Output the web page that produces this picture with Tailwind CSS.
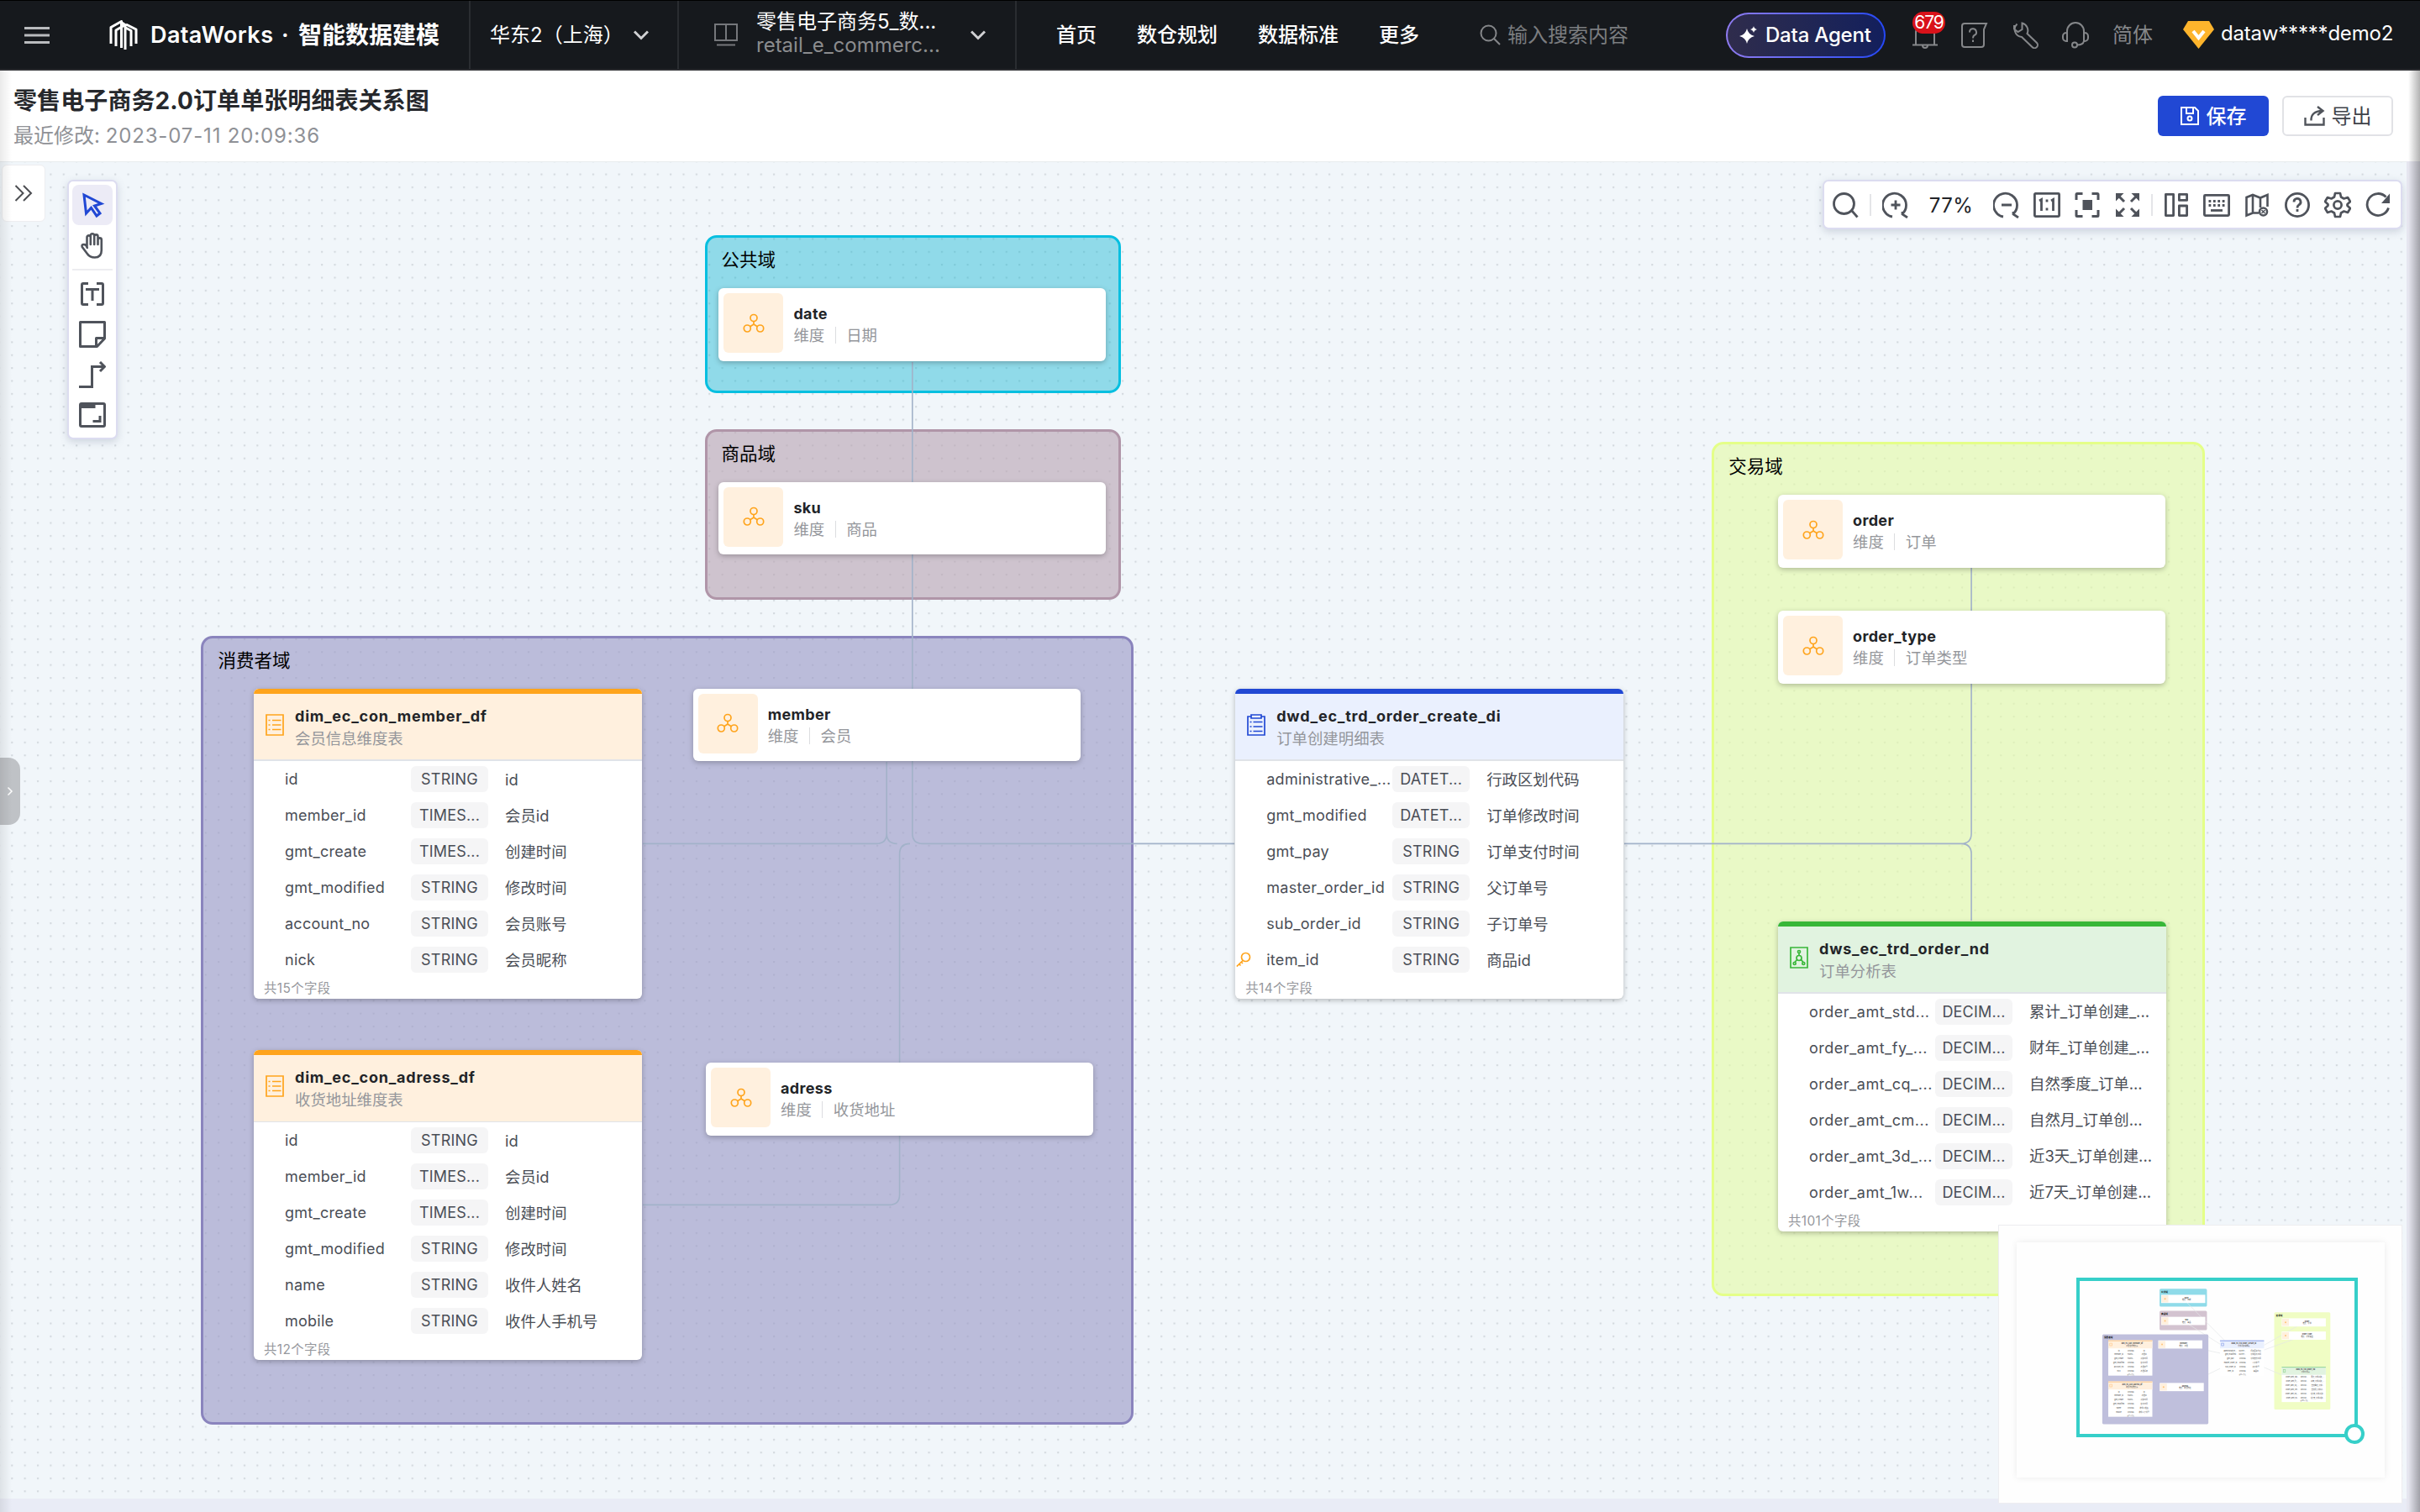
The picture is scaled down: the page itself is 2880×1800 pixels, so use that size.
<!DOCTYPE html>
<html lang="zh-CN">
<head>
    <meta charset="UTF-8">
    <meta name="viewport" content="width=device-width, initial-scale=1.0">
    <title>DataWorks · 智能数据建模</title>
    <script src="https://cdn.jsdelivr.net/npm/@tailwindcss/browser@4"></script>
</head>
<body class="w-[2880px] h-[1800px] overflow-hidden bg-[#e9ecf6] font-['Inter','Noto_Sans_CJK_SC',sans-serif] text-[24px] leading-none flex flex-col">

    <!-- 顶部导航 -->
    <header class="h-[84px] shrink-0 bg-[#16191d] border-t border-t-black border-b-2 border-b-[#2b2c30] flex items-stretch text-white whitespace-nowrap">
        <div class="w-[560px] shrink-0 border-r-2 border-[#2a2d31] flex items-center pl-[29px]">
            <svg class="w-[30px] h-[20px]" viewBox="0 0 30 20" fill="#b9bbbe"><path d="M0 0h30v3H0zM0 8.5h30v3H0zM0 17h30v3H0z"/></svg>
            <svg class="w-[34px] h-[36px] ml-[71px]" viewBox="0 0 34 36" fill="none" stroke="#fff" stroke-width="3" stroke-linejoin="round">
                <path d="M2 28V8.500L14.500 1.500V33M8 31V12l11-6.500 V35M13.500 2l6 4M26 31V12.500L19.500 9M20 5l12 6v17"/>
            </svg>
            <span class="ml-[15px] w-[146px] text-[27px] font-semibold tracking-[0.4px]">DataWorks</span>
            <span class="ml-[10px] w-[20px] text-[27px] font-semibold">·</span>
            <span class="text-[28px] font-bold">智能数据建模</span>
        </div>
        <div class="w-[248px] shrink-0 border-r-2 border-[#2a2d31] flex items-center pl-[23px]">
            <span class="w-[171px]">华东2（上海）</span>
            <svg class="w-[18px] h-[12px]" viewBox="0 0 18 12" fill="none" stroke="#d0d1d3" stroke-width="3"><path d="M1 1.500l8 8 8-8"/></svg>
        </div>
        <div class="w-[402px] shrink-0 border-r-2 border-[#2a2d31] flex items-center pl-[42px]">
            <svg class="w-[28px] h-[28px]" viewBox="0 0 28 28" fill="none" stroke="#75777b" stroke-width="2"><path d="M1 1h26v19H1zM14 1v19M3 25.500h22"/></svg>
            <div class="ml-[22px] w-[255px] pb-[3px]">
                <div class="h-[28px] leading-[28px]">零售电子商务5_数...</div>
                <div class="h-[28px] leading-[28px] text-[#8b8c8e]">retail_e_commerc...</div>
            </div>
            <svg class="w-[18px] h-[12px]" viewBox="0 0 18 12" fill="none" stroke="#d0d1d3" stroke-width="3"><path d="M1 1.500l8 8 8-8"/></svg>
        </div>
        <nav class="ml-[47px] flex items-center gap-12 font-medium">
            <a>首页</a><a>数仓规划</a><a>数据标准</a><a>更多</a>
        </nav>
        <div class="ml-[72px] flex items-center text-[#7b7d80]">
            <svg class="w-[25px] h-[25px] mr-[8px]" viewBox="0 0 25 25" fill="none" stroke="#85878a" stroke-width="2"><circle cx="10.500" cy="10.500" r="9"/><path d="M17 17l7 7"/></svg>
            输入搜索内容
        </div>
        <div class="ml-auto flex items-center pr-[33px]">
            <div class="w-[190px] h-[54px] rounded-full p-[2px] bg-linear-to-r from-[#8f7bf0] to-[#2447f5]">
                <div class="w-full h-full rounded-full bg-linear-to-r from-[#2f2c4c] to-[#131f5c] flex items-center pl-[14px]">
                    <svg class="w-[22px] h-[22px]" viewBox="0 0 22 22" fill="#fff"><path d="M9 3q1.500 7 9 9-7.500 2-9 9-1.500-7-9-9 7.500-2 9-9zM17 0q.6 3 4 4-3.400 1-4 4-.6-3-4-4 3.400-1 4-4z"/></svg>
                    <span class="ml-[9px] tracking-[-0.2px] font-medium">Data Agent</span>
                </div>
            </div>
            <div class="relative ml-[32px] w-[30px] h-[32px]">
                <svg class="w-[30px] h-[32px]" viewBox="0 0 30 32" fill="none" stroke="#85878a" stroke-width="2"><path d="M4 27V13a11 11 0 0 1 22 0v14M0 27.500h30M12 28a3 3 0 0 0 6 0"/></svg>
                <span class="absolute left-0 -top-[12px] w-[39px] h-[26px] rounded-full bg-[#d9121a] text-[21px] leading-[26px] text-center tracking-[-1px]">679</span>
            </div>
            <svg class="ml-[28px] w-[32px] h-[30px]" viewBox="0 0 32 30" fill="none" stroke="#85878a" stroke-width="2"><path d="M30 1H4a3 3 0 0 0-3 3v22a3 3 0 0 0 3 3h20a3 3 0 0 0 3-3V8z"/><path d="M10 11.500a4 4 0 1 1 5.500 3.500q-1.500.8-1.500 3.500M14 20.500v2.500"/></svg>
            <svg class="ml-[28px] w-[32px] h-[32px]" viewBox="0 0 32 32" fill="none" stroke="#85878a" stroke-width="2"><path d="M6.500 2.500A9 9 0 0 0 12 18l12.500 12a3.600 3.600 0 0 0 5.500-5L18.500 14A9 9 0 0 0 12.500 1.500V9L7.500 12 3 8.500V4"/></svg>
            <svg class="ml-[28px] w-[32px] h-[32px]" viewBox="0 0 32 32" fill="none" stroke="#85878a" stroke-width="2"><path d="M6 13V11a10 10 0 0 1 20 0v2M6 13v10H5a4 4 0 0 1-4-4v-2a4 4 0 0 1 4-4zM26 13v10h1a4 4 0 0 0 4-4v-2a4 4 0 0 0-4-4zM26 23q-1 4.500-8 4.500"/><circle cx="15" cy="27.500" r="3"/></svg>
            <span class="ml-[28px] text-[#85878a]">简体</span>
            <svg class="ml-[36px] w-[37px] h-[33px]" viewBox="0 0 37 33"><path d="M6 0h25l6 10-18.500 23L0 10z" fill="#fdb42c"/><path d="M12 12l6.500 8 6.500-8" fill="none" stroke="#fff" stroke-width="4"/></svg>
            <span class="ml-[8px] w-[204px] pb-[3px] tracking-[-0.2px]">dataw*****demo2</span>
        </div>
    </header>

    <!-- 标题栏 -->
    <section class="h-[108px] shrink-0 bg-white flex items-center pl-[16px] pr-[32px]">
        <div class="h-full pt-[18px]">
            <h1 class="h-[36px] leading-[36px] text-[28px] font-bold text-[#26282c] tracking-[0.1px]">零售电子商务2.0订单单张明细表关系图</h1>
            <p class="mt-[9px] h-[30px] leading-[30px] text-[#8f9196]">最近修改: <span class="tracking-[0.85px]">2023-07-11 20:09:36</span></p>
        </div>
        <button class="ml-auto w-[132px] h-[48px] rounded-[6px] bg-[#2148d4] text-white flex items-center justify-center gap-[9px] font-medium">
            <svg class="w-[22px] h-[22px]" viewBox="0 0 22 22" fill="none" stroke="#fff" stroke-width="2"><path d="M1 1h16l4 4v16H1zM7 1v7h8V1"/><circle cx="11" cy="14" r="2.500"/></svg>
            <span class="pt-[2px]">保存</span>
        </button>
        <button class="ml-[16px] w-[132px] h-[48px] rounded-[6px] border-2 border-[#e1e2e6] text-[#3f434a] flex items-center justify-center gap-[8px]">
            <svg class="w-[25px] h-[24px]" viewBox="0 0 25 24" fill="none" stroke="#50545b" stroke-width="2.400"><path d="M1.500 14v8.500h22V14M8.500 17.500q-.5-11 13-11.500M16 1l6.500 5-6.500 5"/></svg>
            <span class="pt-[2px]">导出</span>
        </button>
    </section>

    <!-- 画布 -->
    <main class="relative w-[2864px] h-[1592px] border-t border-[#e8ecee] bg-[#f1f6fa] overflow-hidden">
        <svg class="absolute left-0 top-0 w-full h-full">
            <defs>
                <pattern id="grid" width="15.37" height="15.37" patternUnits="userSpaceOnUse" x="6.500" y="6.800">
                    <rect x="6.700" y="6.700" width="2.200" height="2.200" rx=".5" fill="#d3d9de"/>
                </pattern>
            </defs>
            <rect width="100%" height="100%" fill="url(#grid)"/>
        </svg>
        <div id="groups"></div>
        <svg class="absolute left-0 -top-[193px] w-[2864px] h-[1800px]" fill="none" stroke="#a2b2c9" stroke-width="1.600">
            <path d="M1085.800 431V992q0 12.400 12.400 12.400H1469"/>
            <path d="M1055.200 907V992q0 12.400 12.400 12.400M1055.200 992q0 12.400-12.400 12.400H765"/>
            <path d="M1083 1004.400q-12.400 0-12.400 12.400V1422q0 12.400-12.400 12.400H765"/>
            <path d="M1933 1004.400H2333.700q12.400 0 12.400-12.400V676M2333.700 1004.400q12.400 0 12.400 12.400V1096"/>
        </svg>
        <div id="nodes"></div>

        <button class="absolute left-[2px] top-[3px] w-[52px] h-[68px] rounded-[6px] bg-white border border-[#ededf0] flex items-center justify-center">
            <svg class="w-[22px] h-[20px]" viewBox="0 0 22 20" fill="none" stroke="#4c4e52" stroke-width="2"><path d="M1.500 1l9 9-9 9M11 1l9 9-9 9"/></svg>
        </button>

        <!-- 左侧工具 -->
        <div class="absolute left-[80px] top-[21px] w-[60px] h-[309px] rounded-[7px] bg-white border-2 border-[#dcdcf0] shadow-[0_3px_10px_rgba(100,110,140,0.25)] flex flex-col items-center pt-[4px] text-[#4f535b]">
            <button class="w-12 h-12 rounded-[8px] bg-[#ecebf6] flex items-center justify-center text-[#2148d4]">
                <svg class="w-[32px] h-[32px]" viewBox="0 0 32 32" fill="none" stroke="currentColor" stroke-width="3"><path d="M6 4l2.500 22 6-6.500 6.500 9.500 4-3-6.500-9 8-2.500z"/></svg>
            </button>
            <button class="w-12 h-12 flex items-center justify-center">
                <svg class="w-[32px] h-[32px]" viewBox="0 0 32 32" fill="none" stroke="currentColor" stroke-width="2.600" stroke-linecap="round" stroke-linejoin="round"><path d="M9.500 18V6.500a2 2 0 0 1 4.300 0V15M13.800 15V4.500a2.200 2.200 0 0 1 4.400 0V15M18.200 15V5.500a2.100 2.100 0 0 1 4.300 0V15M22.500 15V9.500a2.100 2.100 0 0 1 4.300 0V22q0 8.500-8 8.500-6 0-9-4.500l-6-8q-1-3 2-3t4 4"/></svg>
            </button>
            <div class="w-12 h-[2px] my-[4px] bg-[#ededf0]"></div>
            <button class="w-12 h-12 flex items-center justify-center">
                <svg class="w-[32px] h-[32px]" viewBox="0 0 32 32" fill="none" stroke="currentColor" stroke-width="3"><path d="M11 3.500H5a1.500 1.500 0 0 0-1.500 1.500v22A1.500 1.500 0 0 0 5 28.500h6M21 3.500h6a1.500 1.500 0 0 1 1.500 1.500v22a1.500 1.500 0 0 1-1.500 1.500h-6M8 10.500h16M16 10.500V24"/></svg>
            </button>
            <button class="w-12 h-12 flex items-center justify-center">
                <svg class="w-[32px] h-[32px]" viewBox="0 0 32 32" fill="none" stroke="currentColor" stroke-width="3"><path d="M1.500 1.500h29V21L21.500 30.500h-20zM20.500 30V20.500h10" stroke-linejoin="round"/></svg>
            </button>
            <button class="w-12 h-12 flex items-center justify-center">
                <svg class="w-[32px] h-[32px]" viewBox="0 0 32 32" fill="none" stroke="currentColor" stroke-width="3"><path d="M0 30.500h15.500V6.500H30M25 1l5.500 5.500L25 12"/></svg>
            </button>
            <button class="w-12 h-12 flex items-center justify-center">
                <svg class="w-[32px] h-[32px]" viewBox="0 0 32 32" fill="none" stroke="currentColor" stroke-width="3"><rect x="1.500" y="2.500" width="29" height="27" rx="1.500"/><path d="M1.500 5.500h18" stroke-width="5"/><path d="M16.500 23.500h8.500V17"/></svg>
            </button>
        </div>

        <!-- 右上工具 -->
        <div class="absolute left-[2169px] top-[21px] w-[690px] h-[59px] rounded-[7px] bg-white border-2 border-[#dcdcf0] shadow-[0_3px_10px_rgba(100,110,140,0.25)] flex items-center pl-px pt-px text-[#4f535b]">
            <span class="w-12 flex justify-center"><svg class="w-[32px] h-[32px]" viewBox="0 0 32 32" fill="none" stroke="currentColor" stroke-width="2.800"><circle cx="14.500" cy="14.500" r="12"/><path d="M23.500 22.500l7 8"/></svg></span>
            <span class="w-[2px] h-[26px] mx-[5px] bg-[#e4e5e8]"></span>
            <span class="w-12 flex justify-center"><svg class="w-[32px] h-[32px]" viewBox="0 0 32 32" fill="none" stroke="currentColor" stroke-width="2.800"><path d="M12 30a14 14 0 1 1 12-3.500M24 24v3l6 4M16 10.500v11M10.500 16h11"/></svg></span>
            <span class="w-[84px] pt-px text-center text-[#222428] tracking-[0.4px]">77%</span>
            <span class="w-12 flex justify-center"><svg class="w-[32px] h-[32px]" viewBox="0 0 32 32" fill="none" stroke="currentColor" stroke-width="2.800"><path d="M12 30a14 14 0 1 1 12-3.500M24 24v3l6 4M10 16h12"/></svg></span>
            <span class="w-12 flex justify-center"><svg class="w-[32px] h-[32px]" viewBox="0 0 32 32" fill="none" stroke="currentColor" stroke-width="2.800"><rect x="1.400" y="2.400" width="29.200" height="27.200" rx="1"/><path d="M7 11l2.500-1.500V23M21 11l2.500-1.500V23M14.600 11h2.800M14.600 21h2.800"/></svg></span>
            <span class="w-12 flex justify-center"><svg class="w-[32px] h-[32px]" viewBox="0 0 32 32" fill="none" stroke="currentColor" stroke-width="3"><path d="M3 10V3.500a1 1 0 0 1 1-1h6.500M21.500 2.500H28a1 1 0 0 1 1 1V10M29 22v6.500a1 1 0 0 1-1 1h-6.500M10.500 29.500H4a1 1 0 0 1-1-1V22"/><path d="M10.500 10h11.500v12H10.500z" fill="currentColor" stroke="none"/></svg></span>
            <span class="w-12 flex justify-center"><svg class="w-[32px] h-[32px]" viewBox="0 0 32 32" fill="none" stroke="currentColor" stroke-width="3"><path d="M5 5l7 7M27 5l-7 7M5 27l7-7M27 27l-7-7"/><path d="M2 2h9.500L2 11.500zM30 2v9.500L20.500 2zM2 30v-9.500L11.500 30zM30 30h-9.500L30 20.500z" fill="currentColor" stroke="none"/></svg></span>
            <span class="w-[2px] h-[26px] mx-[4px] bg-[#e4e5e8]"></span>
            <span class="w-12 flex justify-center"><svg class="w-[32px] h-[32px]" viewBox="0 0 32 32" fill="none" stroke="currentColor" stroke-width="2.800"><path d="M3.400 3.400h9.200v25.200H3.400zM19.400 3.400h9.200v7H19.400zM19.400 17h9.200v11.600H19.400z" stroke-linejoin="round"/></svg></span>
            <span class="w-12 flex justify-center"><svg class="w-[32px] h-[32px]" viewBox="0 0 32 32" fill="none" stroke="currentColor" stroke-width="2.800"><rect x="1.400" y="4.400" width="29.200" height="24.200" rx="1"/><path d="M6.500 11.500h19M6.500 16.500h19" stroke-dasharray="2.800 2.600"/><path d="M9 22.500h14"/></svg></span>
            <span class="w-12 flex justify-center"><svg class="w-[32px] h-[32px]" viewBox="0 0 32 32" fill="none" stroke="currentColor" stroke-width="2.600"><path d="M18 25.500l-7 0-7.500 3V7l7.500-3 9 3.500L28.500 4v14M11 4v21.500M20 7.500V19"/><circle cx="23.500" cy="24" r="4.500"/><path d="M21.500 22l4 4M25.500 22l-4 4" stroke-width="1.500"/></svg></span>
            <span class="w-12 flex justify-center"><svg class="w-[32px] h-[32px]" viewBox="0 0 32 32" fill="none" stroke="currentColor" stroke-width="2.800"><circle cx="16" cy="16" r="13.600"/><path d="M12 12.500a4 4 0 1 1 5.800 3.500q-1.800 1-1.800 3.500M16 21v3"/></svg></span>
            <span class="w-12 flex justify-center"><svg class="w-[32px] h-[32px]" viewBox="0 0 32 32" fill="none" stroke="currentColor" stroke-width="2.700" stroke-linejoin="round"><path d="M13 2h6l1 4.500 3.500 2 4.500-1.500 3 5-3.500 3.200v1.600L31 20l-3 5-4.500-1.500-3.500 2L19 30h-6l-1-4.500-3.500-2L4 25l-3-5 3.500-3.200v-1.600L1 12l3-5 4.500 1.500 3.500-2z"/><circle cx="16" cy="16" r="4.600"/></svg></span>
            <span class="w-12 flex justify-center"><svg class="w-[32px] h-[32px]" viewBox="0 0 32 32" fill="none" stroke="currentColor" stroke-width="2.800"><path d="M28.500 19.500A13 13 0 1 1 25.500 6.500"/><path d="M30 2.500V14H20z" fill="currentColor" stroke="none"/></svg></span>
        </div>

    </main>

    <!-- 缩略图 -->
    <aside class="absolute left-[2378px] top-[1458px] w-[481px] h-[332px] bg-[#fefefe] border border-[#ededf0] pl-[21px] pt-[20px]">
        <div class="relative w-[438px] h-[280px] bg-[#fefefe] shadow-[0_0_8px_rgba(0,0,0,0.08)]">
            <svg id="minimap" class="w-[438px] h-[280px]" viewBox="-656 -205 3849 2460"></svg>
            <div class="absolute left-[71px] top-[42px] w-[335px] h-[190px] border-4 border-[#36cfc9]"></div>
            <div class="absolute left-[390px] top-[216px] w-[24px] h-[24px] rounded-full bg-white border-4 border-[#36cfc9]"></div>
        </div>
    </aside>

    <button class="absolute left-0 top-[902px] w-[24px] h-[80px] rounded-r-[14px] bg-[#bfc2c6] flex items-center justify-center">
        <svg class="w-[8px] h-[12px]" viewBox="0 0 8 12" fill="none" stroke="#fff" stroke-width="1.500"><path d="M1.500 1.500L6 6l-4.500 4.500"/></svg>
    </button>
    <div class="absolute left-0 top-[84px] w-[14px] h-[1716px] bg-linear-to-r from-black/8 to-transparent pointer-events-none"></div>
    <div class="absolute left-[2864px] top-[192px] w-[16px] h-[1608px] bg-[#e6e6f0]"></div>
    <div class="absolute left-[2866px] top-[84px] w-[14px] h-[1716px] bg-linear-to-l from-black/30 to-transparent pointer-events-none"></div>

    <script>
        // 主题域分组
        const groups = [
            { x: 838.6, y: 280, w: 495.2, h: 187.7, name: '公共域', cls: 'border-[#06bfe0] bg-[#00b2cf]/40', fill: '#8fdbe9' },
            { x: 838.6, y: 510.7, w: 495.2, h: 203, name: '商品域', cls: 'border-[#b095a8] bg-[#b8a1b1]/60', fill: '#d3c3d0' },
            { x: 239.4, y: 756.8, w: 1109.4, h: 939.5, name: '消费者域', cls: 'border-[#8a84bd] bg-[#9896c4]/60', fill: '#bfbfdc' },
            { x: 2037.3, y: 526, w: 587.2, h: 1017.3, name: '交易域', cls: 'border-[#e4ff88] bg-[#e5fca4]/60', fill: '#f0fdc4' }
        ];

        // 维度
        const dims = [
            { x: 855.4, y: 343.2, name: 'date', desc: '日期' },
            { x: 855.4, y: 573.7, name: 'sku', desc: '商品' },
            { x: 824.7, y: 819.8, name: 'member', desc: '会员' },
            { x: 840, y: 1265.4, name: 'adress', desc: '收货地址' },
            { x: 2116, y: 589, name: 'order', desc: '订单' },
            { x: 2116, y: 727.4, name: 'order_type', desc: '订单类型' }
        ];

        // 图标
        const dimIcon = '<svg class="w-[26px] h-[24px]" viewBox="0 0 26 24" fill="none" stroke="#ffa41c" stroke-width="1.700"><circle cx="13" cy="5.500" r="4"/><circle cx="5.300" cy="18" r="4"/><circle cx="20.700" cy="18" r="4"/><path d="M13 9.500v3.500M8.700 15.700L13 13l4.300 2.700"/></svg>';
        const listIcon = '<svg class="w-[22px] h-[26px]" viewBox="0 0 22 26" fill="none" stroke="#ffa41c" stroke-width="1.700"><path d="M1 1h20v24H1zM3.500 7.500h2M8 7.500h10.500M3.500 13h2M8 13h10.500M3.500 18.500h2M8 18.500h10.500"/></svg>';
        const factIcon = '<svg class="w-[22px] h-[26px]" viewBox="0 0 22 26" fill="none" stroke="#2148d4" stroke-width="1.700"><path d="M5 3H1v22h20V3h-4M5 1h12v4H5zM3.500 9.500h2M7.500 9.500h11M3.500 15h2M7.500 15h11M3.500 20.500h2M7.500 20.500h11"/></svg>';
        const aggIcon = '<svg class="w-[22px] h-[26px]" viewBox="0 0 22 26" fill="none" stroke="#38b738" stroke-width="1.700"><path d="M1 1h20v24H1zM11 7.500v3M8.500 15.500L6 18.500M13.500 15.500l2.500 3"/><circle cx="11" cy="6" r="1.500"/><circle cx="11" cy="13.500" r="3"/><circle cx="5.700" cy="20" r="1.500"/><circle cx="16.300" cy="20" r="1.500"/></svg>';
        const keyIcon = '<svg class="w-[18px] h-[18px]" viewBox="0 0 18 18" fill="none" stroke="#ffa41c" stroke-width="1.700"><circle cx="11.500" cy="6.500" r="5"/><path d="M8 10.500L.8 17.500M3.500 14.500l2 2M6 12l2 2"/></svg>';

        // 表
        const tables = [
            {
                x: 302, y: 819.8, name: 'dim_ec_con_member_df', desc: '会员信息维度表', total: 15, icon: listIcon,
                cls: 'border-[#ffa41c] bg-[#fff0de]', top: '#ffc88a', fill: '#fff0de', gap: 'tracking-[0.25px]',
                rows: [['id', 'STRING', 'id'], ['member_id', 'TIMES...', '会员id'], ['gmt_create', 'TIMES...', '创建时间'], ['gmt_modified', 'STRING', '修改时间'], ['account_no', 'STRING', '会员账号'], ['nick', 'STRING', '会员昵称']]
            },
            {
                x: 302, y: 1250.2, name: 'dim_ec_con_adress_df', desc: '收货地址维度表', total: 12, icon: listIcon,
                cls: 'border-[#ffa41c] bg-[#fff0de]', top: '#ffc88a', fill: '#fff0de', gap: 'tracking-[0.25px]',
                rows: [['id', 'STRING', 'id'], ['member_id', 'TIMES...', '会员id'], ['gmt_create', 'TIMES...', '创建时间'], ['gmt_modified', 'STRING', '修改时间'], ['name', 'STRING', '收件人姓名'], ['mobile', 'STRING', '收件人手机号']]
            },
            {
                x: 1470.2, y: 819.8, name: 'dwd_ec_trd_order_create_di', desc: '订单创建明细表', total: 14, icon: factIcon,
                cls: 'border-[#2148d4] bg-[#eaf0fe]', top: '#8ba0e8', fill: '#eaf0fe', gap: 'tracking-[0.3px]',
                rows: [['administrative_...', 'DATET...', '行政区划代码'], ['gmt_modified', 'DATET...', '订单修改时间'], ['gmt_pay', 'STRING', '订单支付时间'], ['master_order_id', 'STRING', '父订单号'], ['sub_order_id', 'STRING', '子订单号'], ['item_id', 'STRING', '商品id', true]]
            },
            {
                x: 2116, y: 1096.5, name: 'dws_ec_trd_order_nd', desc: '订单分析表', total: 101, icon: aggIcon,
                cls: 'border-[#38b738] bg-[#e1f3e0]', top: '#93d593', fill: '#e1f3e0', gap: 'tracking-[0.5px]',
                rows: [['order_amt_std...', 'DECIM...', '累计_订单创建_...'], ['order_amt_fy_...', 'DECIM...', '财年_订单创建_...'], ['order_amt_cq_...', 'DECIM...', '自然季度_订单...'], ['order_amt_cm...', 'DECIM...', '自然月_订单创...'], ['order_amt_3d_...', 'DECIM...', '近3天_订单创建...'], ['order_amt_1w...', 'DECIM...', '近7天_订单创建...']]
            }
        ];

        const TOP = 193;

        document.getElementById('groups').innerHTML = groups.map(g => `
            <div class="absolute rounded-[14px] border-3 pl-[17px] pt-[13px] text-[21.5px] leading-[26px] text-black ${g.cls}" style="left:${g.x}px;top:${g.y - TOP}px;width:${g.w}px;height:${g.h}px">${g.name}</div>`).join('');

        document.getElementById('nodes').innerHTML = dims.map(d => `
            <div class="absolute w-[461px] h-[86.5px] rounded-[6px] bg-white shadow-[0_2px_6px_rgba(0,0,0,0.25)] flex pl-[6px] pt-[6px] whitespace-nowrap" style="left:${d.x}px;top:${d.y - TOP}px">
                <div class="w-[71px] h-[71px] rounded-[6px] bg-[#fff0de] flex items-center justify-center">${dimIcon}</div>
                <div class="ml-[12px] pt-[13px]">
                    <div class="h-[24px] leading-[24px] text-[18px] font-bold text-[#222428] tracking-[0.35px]">${d.name}</div>
                    <div class="h-[26px] leading-[26px] text-[18.4px] text-[#94969b] flex items-center">
                        <span>维度</span><span class="w-px h-[20px] mx-[12.5px] bg-[#dcdde0]"></span><span>${d.desc}</span>
                    </div>
                </div>
            </div>`).join('') + tables.map(t => `
            <div class="absolute w-[461.500px] h-[369px] rounded-[6px] bg-white shadow-[0_2px_6px_rgba(0,0,0,0.25)] overflow-hidden whitespace-nowrap" style="left:${t.x}px;top:${t.y - TOP}px">
                <div class="h-[84.500px] border-t-6 flex pl-[14px] pt-[15px] ${t.cls}">
                    <div class="pt-[9px] w-[35px]">${t.icon}</div>
                    <div>
                        <div class="h-[25px] leading-[24px] text-[18px] font-bold text-[#222428] tracking-[0.78px]">${t.name}</div>
                        <div class="h-[26px] leading-[26px] text-[18.4px] text-[#94969b]">${t.desc}</div>
                    </div>
                </div>
                <div class="h-[1.5px] bg-[#e0e3e8]"></div>
                ${t.rows.map(r => `
                <div class="h-[43.04px] flex items-center text-[18px] text-[#4a4e56]">
                    <span class="w-[37px] pl-px">${r[3] ? keyIcon : ''}</span>
                    <span class="w-[150px] pt-px ${t.gap}">${r[0]}</span>
                    <span class="w-[92px] h-[31px] leading-[32px] rounded-[6px] bg-[#f5f5f6] text-center tracking-[0.2px]">${r[1]}</span>
                    <span class="ml-[20px] pt-px text-[18.4px]">${r[2]}</span>
                </div>`).join('')}
                <div class="pl-[12px] h-[24px] leading-[25px] text-[15.4px] text-[#96989d] tracking-[0.4px]">共${t.total}个字段</div>
            </div>`).join('');

        // 缩略图与画布共用坐标
        const text = (x, y, s, size, extra = '') => `<text x="${x}" y="${y}" font-size="${size}" text-anchor="middle" fill="#444" ${extra}>${s}</text>`;
        const group = g => `<rect x="${g.x}" y="${g.y}" width="${g.w}" height="${g.h}" rx="14" fill="${g.fill}"/><text x="${g.x + 18}" y="${g.y + 42}" font-size="23" font-weight="700">${g.name}</text>`;
        const center = n => [n.x + 230, n.y + (n.rows ? 184 : 43)];
        const [fx, fy] = center(tables[2]);
        const line = n => `<path d="M${center(n)}L${fx} ${fy}" stroke="#e3e6e8" stroke-width="6"/>`;
        document.getElementById('minimap').innerHTML =
            [groups[0], groups[1], groups[3]].map(group).join('') +
            dims.concat(tables[3]).map(line).join('') + group(groups[2]) +
            dims.map(d => `<rect x="${d.x}" y="${d.y}" width="461" height="86" fill="#fff"/><rect x="${d.x + 4}" y="${d.y + 6}" width="71" height="74" fill="#fff0de"/><circle cx="${d.x + 40}" cy="${d.y + 43}" r="9" fill="#ffc57a"/>` +
                text(d.x + 265, d.y + 38, d.name, 19, 'font-weight="700"') + text(d.x + 265, d.y + 62, '维度　' + d.desc, 18)).join('') +
            tables.map(t => `<rect x="${t.x}" y="${t.y}" width="461" height="369" fill="#fff"/><rect x="${t.x}" y="${t.y}" width="461" height="84" fill="${t.fill}"/><rect x="${t.x}" y="${t.y}" width="461" height="9" fill="${t.top}"/><rect x="${t.x + 16}" y="${t.y + 30}" width="22" height="26" fill="none" stroke="${t.top}" stroke-width="6"/>` +
                text(t.x + 250, t.y + 38, t.name, 19, 'font-weight="700"') + text(t.x + 250, t.y + 62, t.desc, 18) +
                t.rows.map((r, i) => text(t.x + 110, t.y + 114 + i * 43, r[0], 18) + text(t.x + 235, t.y + 114 + i * 43, r[1], 18) + text(t.x + 375, t.y + 114 + i * 43, r[2], 18)).join('') +
                text(t.x + 235, t.y + 362, `共${t.total}个字段`, 15)).join('');
    </script>
</body>
</html>
